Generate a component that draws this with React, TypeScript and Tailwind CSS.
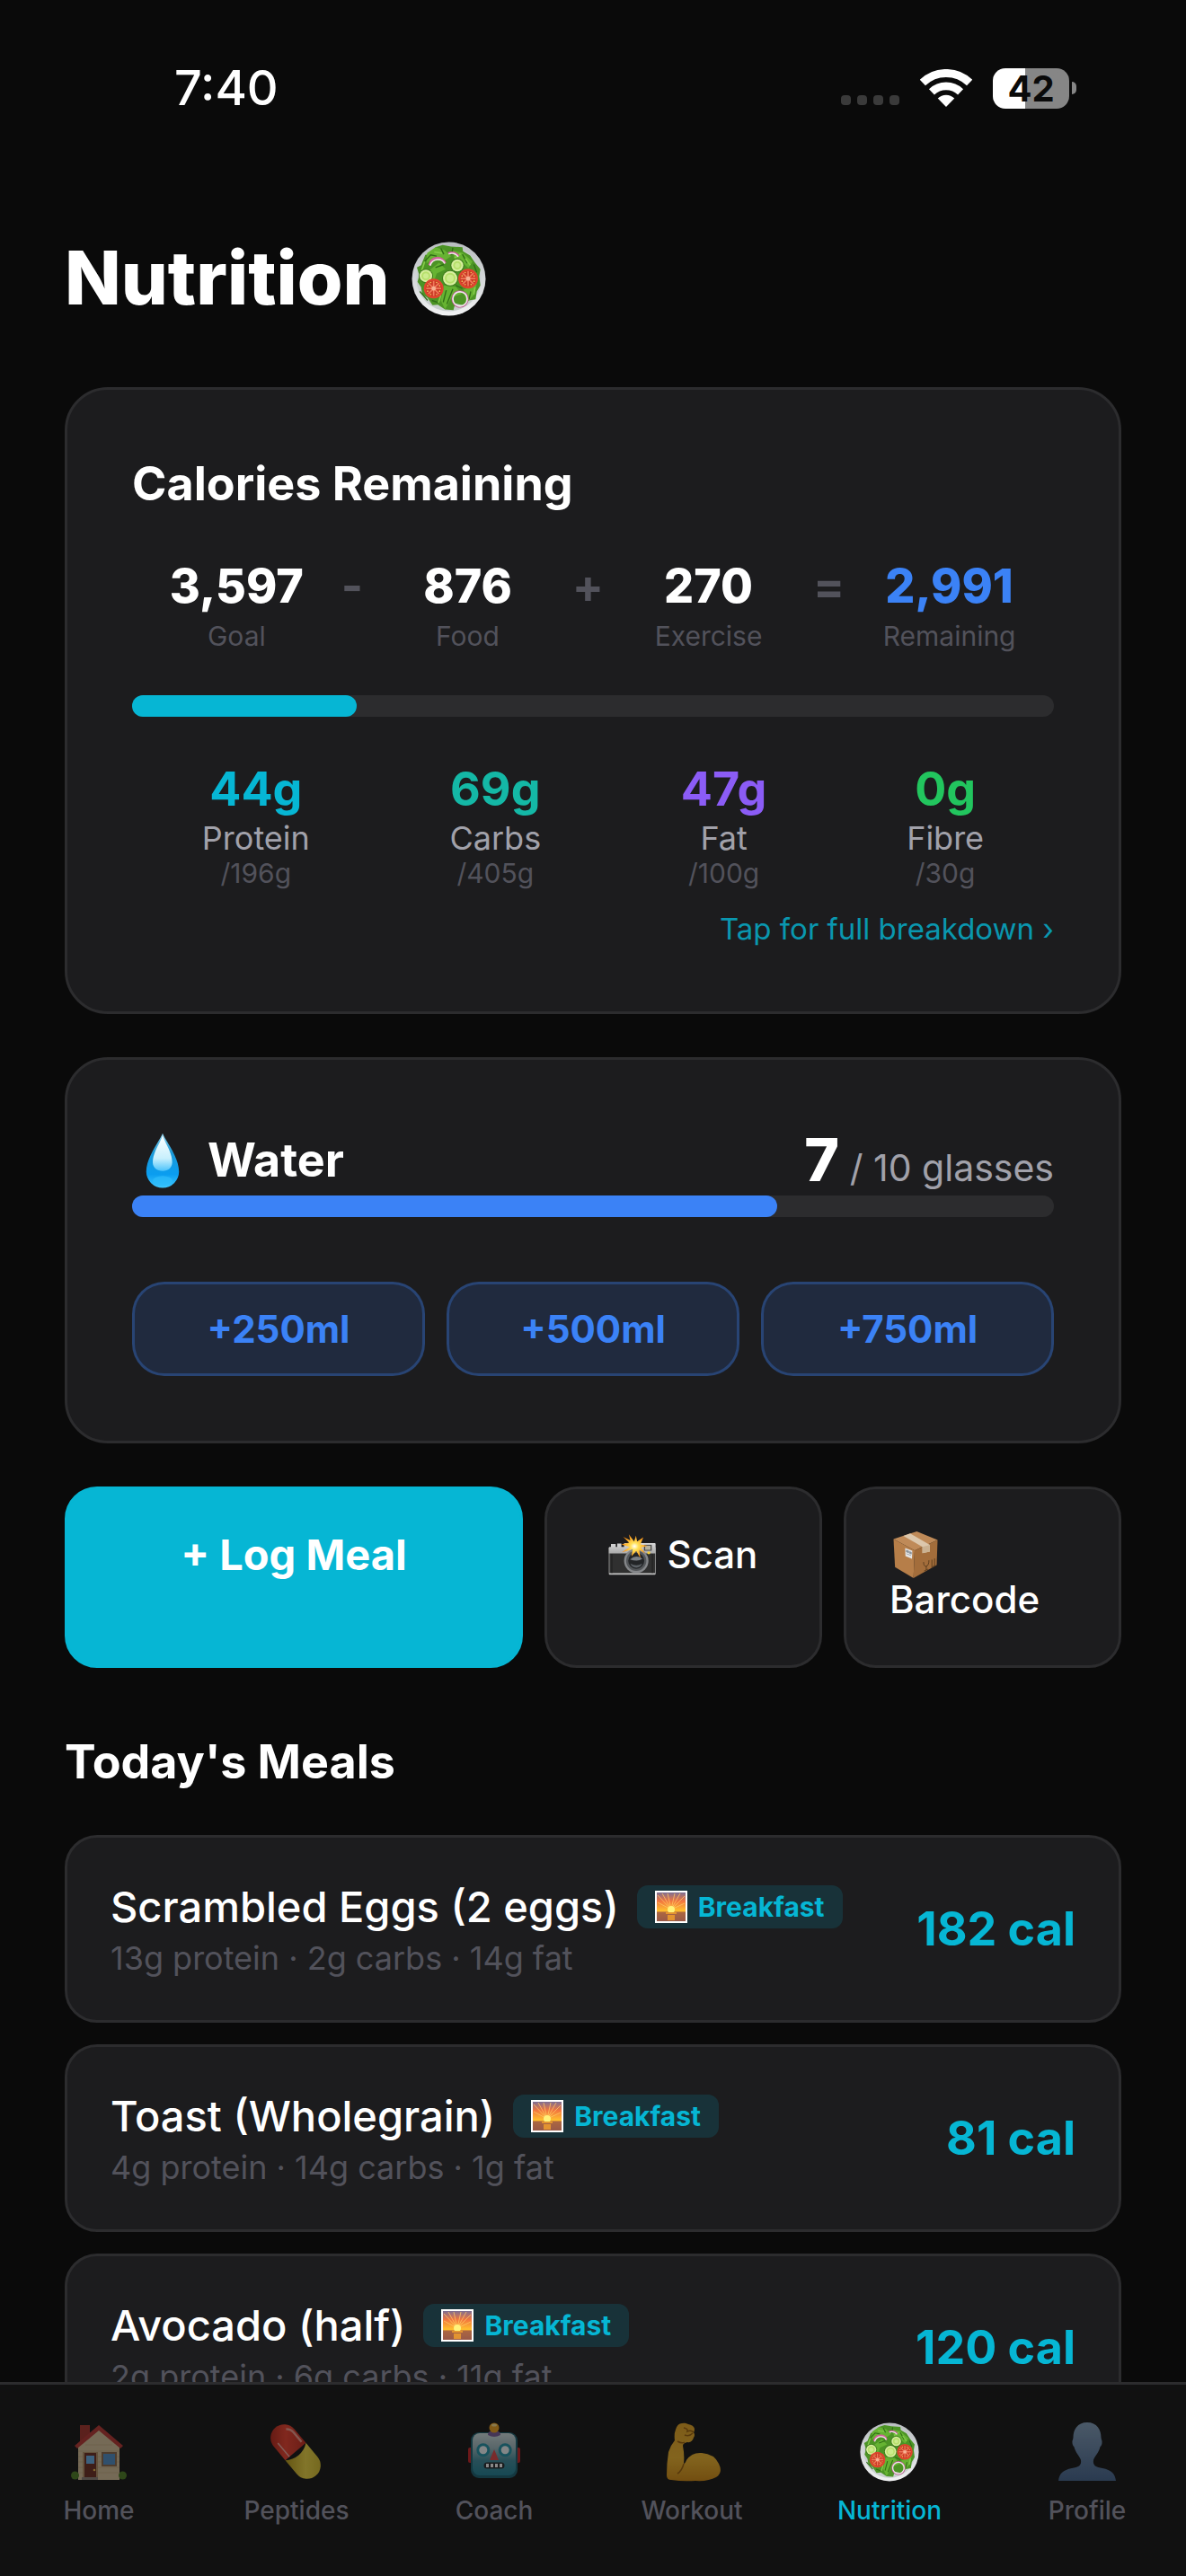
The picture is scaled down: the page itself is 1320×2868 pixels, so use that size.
import type { ReactNode } from "react";

const macros = [
  { value: "44g", label: "Protein", goal: "/196g", color: "text-[#06b6d4]" },
  { value: "69g", label: "Carbs", goal: "/405g", color: "text-[#14b8a6]" },
  { value: "47g", label: "Fat", goal: "/100g", color: "text-[#8b5cf6]" },
  { value: "0g", label: "Fibre", goal: "/30g", color: "text-[#22c55e]" },
];

const meals = [
  { name: "Scrambled Eggs (2 eggs)", detail: "13g protein · 2g carbs · 14g fat", cal: 182 },
  { name: "Toast (Wholegrain)", detail: "4g protein · 14g carbs · 1g fat", cal: 81 },
  { name: "Avocado (half)", detail: "2g protein · 6g carbs · 11g fat", cal: 120 },
];

// gradients shared by the emoji drawings
function Gradients() {
  return (
    <svg className="absolute w-0 h-0" aria-hidden="true">
      <defs>
        <linearGradient id="plate" x1="0" y1="0" x2="0" y2="1">
          <stop offset="0" stopColor="#b9bdc0" />
          <stop offset="1" stopColor="#f1f2f3" />
        </linearGradient>
        <linearGradient id="drop" x1="0" y1="0" x2="0" y2="1">
          <stop offset="0" stopColor="#8fd0ea" />
          <stop offset="0.35" stopColor="#1b9ad8" />
          <stop offset="0.75" stopColor="#0a9df0" />
          <stop offset="1" stopColor="#3fc8ff" />
        </linearGradient>
        <linearGradient id="dropShine" x1="0" y1="0" x2="0" y2="1">
          <stop offset="0" stopColor="#ffffff" />
          <stop offset="0.65" stopColor="#c8f0fd" />
          <stop offset="1" stopColor="#4cc3fb" />
        </linearGradient>
        <linearGradient id="silver" x1="0" y1="0" x2="0" y2="1">
          <stop offset="0" stopColor="#d9d9d9" />
          <stop offset="1" stopColor="#a9a9a9" />
        </linearGradient>
        <radialGradient id="flash">
          <stop offset="0" stopColor="#ffffff" />
          <stop offset="0.3" stopColor="#ffe25a" />
          <stop offset="1" stopColor="#fb8a0c" />
        </radialGradient>
        <linearGradient id="dusk" x1="0" y1="0" x2="0" y2="1">
          <stop offset="0" stopColor="#7d6f93" />
          <stop offset="0.3" stopColor="#f2763f" />
          <stop offset="0.64" stopColor="#ffc02e" />
          <stop offset="0.68" stopColor="#c9803a" />
          <stop offset="1" stopColor="#8c5250" />
        </linearGradient>
        <linearGradient id="robot" x1="0" y1="0" x2="0" y2="1">
          <stop offset="0" stopColor="#d3e2e4" />
          <stop offset="0.35" stopColor="#9fbac0" />
          <stop offset="0.65" stopColor="#3e8d9e" />
          <stop offset="1" stopColor="#1d8195" />
        </linearGradient>
        <linearGradient id="bust" x1="0" y1="0" x2="0" y2="1">
          <stop offset="0" stopColor="#84a0bd" />
          <stop offset="1" stopColor="#44658f" />
        </linearGradient>
        <linearGradient id="arm" x1="0" y1="0" x2="0" y2="1">
          <stop offset="0" stopColor="#e8a520" />
          <stop offset="0.6" stopColor="#f3b62b" />
          <stop offset="1" stopColor="#d38b10" />
        </linearGradient>
        <linearGradient id="pillRed" x1="0" y1="1" x2="1" y2="0">
          <stop offset="0" stopColor="#a81b10" />
          <stop offset="0.5" stopColor="#f0402c" />
          <stop offset="1" stopColor="#c52a1c" />
        </linearGradient>
        <linearGradient id="pillYellow" x1="0" y1="1" x2="1" y2="0">
          <stop offset="0" stopColor="#b99a16" />
          <stop offset="0.5" stopColor="#f2d943" />
          <stop offset="1" stopColor="#cfb626" />
        </linearGradient>
      </defs>
    </svg>
  );
}

function Tomato({ x, y }: { x: number; y: number }) {
  return (
    <g transform={`translate(${x} ${y})`}>
      <circle r="33" fill="#e2452f" />
      <circle r="27" fill="#c93a26" />
      <g stroke="#f0795a" strokeWidth="5">
        <path d="M0-25V25M-25 0H25M-18-18L18 18M-18 18L18-18" />
      </g>
      <circle r="7" fill="#f6b193" />
      <g fill="#f3c35c">
        <circle cx="-10" cy="-20" r="2.5" /><circle cx="10" cy="-20" r="2.5" />
        <circle cx="-20" cy="-9" r="2.5" /><circle cx="20" cy="-9" r="2.5" />
        <circle cx="-20" cy="9" r="2.5" /><circle cx="20" cy="9" r="2.5" />
        <circle cx="-10" cy="20" r="2.5" /><circle cx="10" cy="20" r="2.5" />
      </g>
    </g>
  );
}

function Cucumber({ x, y, r }: { x: number; y: number; r: number }) {
  return (
    <g transform={`translate(${x} ${y})`}>
      <circle r={r} fill="#3d7a1c" />
      <circle r={r - 3} fill="#d9f0a0" />
      <circle r={r - 9} fill="#b7e06c" />
      <circle r={r - 15} fill="#cdec8e" />
    </g>
  );
}

function Salad({ className }: { className: string }) {
  return (
    <svg viewBox="52 54 249 248" className={className} aria-hidden="true">
      <circle cx="176.5" cy="178" r="123" fill="url(#plate)" />
      <circle cx="176.5" cy="178" r="108" fill="#c9cfcf" />
      <path d="M132 72l24-7 28 5 38 2 2 14 24 14 16 24 18 22-4 24 4 30-12 20-4 26-22 4-20 16-26-6-6 22-28-2-24-16-18 2-16-24-18-12-4-24-12-18 6-22-8-26 14-8 14-34 20-4z" fill="#4c9425" />
      <path d="M132 72l30 10 22 20-26 18-32-10-24 16 2-34zM190 84l32 6 34 30-14 22-22-20-24-4zM110 150l34-26 22 22-30 14-10 30zM160 200l40 4 20 24-34 12-22 40-14-30zM226 214l44-18-10 36-24 26z" fill="#66b332" />
      <path d="M96 120l20-22 20 4M150 76l10 20M190 74l-4 24M222 96l16 30M160 130l-28 10M214 160l12-26M260 130l10 26M80 220l26 30M120 250l24 8M168 216l-10 40M190 212l-20 50M200 200l22 10M250 220l-6 26" fill="none" stroke="#2f6d16" strokeWidth="4" />
      <path d="M86 150l10-30M128 88l26 4M196 108l20-14M232 110l16 22M150 232l-8 26M264 206l-4 24" fill="none" stroke="#86cc4b" strokeWidth="5" />
      <path d="M112 132c6-30 44-30 52-6" fill="none" stroke="#d2619b" strokeWidth="8" />
      <path d="M114 134c8-26 40-26 49-7" fill="none" stroke="#f5e8ef" strokeWidth="5" />
      <path d="M174 92c12-6 28-2 36 10" fill="none" stroke="#c95c94" strokeWidth="6" />
      <path d="M176 95c12-5 24-1 32 9" fill="none" stroke="#f3e5ec" strokeWidth="4" />
      <Cucumber x={205} y={133} r={23} />
      <Cucumber x={100} y={168} r={24} />
      <Cucumber x={181} y={176} r={27} />
      <Tomato x={126} y={210} />
      <Tomato x={241} y={177} />
      <circle cx="214" cy="245" r="26" fill="none" stroke="#b7568a" strokeWidth="6" />
      <circle cx="214" cy="245" r="24" fill="none" stroke="#efe9ea" strokeWidth="5" />
    </svg>
  );
}

function Drop() {
  return (
    <svg viewBox="60 34 128 184" className="w-11 h-16" aria-hidden="true">
      <path d="M124 38c8 22 53 77 53 124a53 53 0 0 1-106 0c0-47 45-102 53-124z" fill="url(#drop)" />
      <path d="M124 44c6 24 31 54 31 88 0 18-13 28-31 28s-32-10-32-28c0-34 26-64 32-88z" fill="url(#dropShine)" />
      <ellipse cx="124" cy="192" rx="32" ry="16" fill="#2dbcfb" opacity="0.7" />
    </svg>
  );
}

function Camera() {
  return (
    <svg viewBox="24 26 160 137" className="w-[53px] h-[46px]" aria-hidden="true">
      <path d="M33 58h16v12H33zM54 57h14v14H54z" fill="#cfcfcf" />
      <rect x="26" y="69" width="157" height="93" rx="3" fill="#bdbdbd" />
      <path d="M26 72a3 3 0 0 1 3-3h48V57q0-2 3-2h100q3 0 3 3v32H26z" fill="url(#silver)" />
      <rect x="28" y="90" width="153" height="66" fill="#303030" />
      <path d="M36 92v64M172 92v64" stroke="#1d1d1d" strokeWidth="3" />
      <rect x="144" y="61" width="26" height="20" fill="#4a4a4a" />
      <rect x="148" y="64" width="18" height="14" fill="#b8b39f" />
      <circle cx="118" cy="115" r="41" fill="#85878a" />
      <circle cx="118" cy="115" r="34" fill="#54575a" />
      <circle cx="118" cy="115" r="27" fill="#232527" />
      <path d="M97 110q20-18 42-2-10 6-20 6t-22-4z" fill="#7c8186" />
      <path d="M98 124q20 12 40 0-6 14-20 14t-20-14z" fill="#5b6065" />
      <circle cx="160" cy="88" r="5" fill="#f7cf32" />
      <path d="M93 26l18 24 6-20 4 20 21-14-10 24 24 4-22 6 14 20-20-12 4 28-14-24-16 18 4-24-36 10 26-18-28-8 26-6-20-20 24 12z" fill="url(#flash)" />
    </svg>
  );
}

function Box() {
  return (
    <svg viewBox="974 17 150 157" className="w-[50px] h-[52px]" aria-hidden="true">
      <path d="M975 43l78-26 70 29-77 35z" fill="#bf8a58" />
      <path d="M975 43l71 38-4 93-62-37z" fill="#b67e49" />
      <path d="M1123 46l-77 35-4 93 78-44z" fill="#a36d3b" />
      <path d="M1008 32l23-8 66 38v23l-25 5V69z" fill="#dcc7ac" />
      <path d="M1072 69l25-7v23l-25 5z" fill="#cbb292" />
      <path d="M1014 73l24 9-1 27-22-9z" fill="#e6e6e6" />
      <path d="M1018 80l8 3v6l-8-3zM1029 85l6 2v6l-6-2zM1018 92l16 6" fill="#8a9299" stroke="#8a9299" strokeWidth="2" />
      <path d="M1076 120q0 16 9 14t9-20M1085 134v13M1078 150l13-6M1104 112v24M1113 108v24M1102 138l14-7" fill="none" stroke="#5d3d1e" strokeWidth="3" />
    </svg>
  );
}

function Sunrise() {
  return (
    <svg viewBox="0 0 36 36" className="w-9 h-9" aria-hidden="true">
      <rect width="36" height="36" fill="#fff" />
      <rect x="2" y="2" width="32" height="32" fill="url(#dusk)" />
      <g stroke="#ffc564" strokeWidth="1" opacity="0.8">
        <path d="M18 21L3 5M18 21L8 3M18 21L14 3M18 21L22 3M18 21L28 3M18 21L33 6M18 21L3 13M18 21L33 14" />
      </g>
      <circle cx="18" cy="21" r="4" fill="#fff27a" />
      <path d="M2 24h32v10H2z" fill="#a05c45" opacity="0.7" />
      <path d="M12 24h12v2H12zM14 27h8v6h-8z" fill="#f3a02c" opacity="0.8" />
    </svg>
  );
}

function House() {
  return (
    <svg viewBox="0 0 66 66" className="w-[66px] h-[66px]" aria-hidden="true">
      <path d="M12 3h11v12l-11 9z" fill="#a5312a" />
      <path d="M10 27L33 8l23 19v37H10z" fill="#d9c39b" />
      <path d="M10 32h46M10 38h46M10 44h46M10 50h46M10 56h46M18 25h30" stroke="#c8b087" />
      <path d="M33 3L6 26l3 3L33 9l24 20 3-3z" fill="#b93430" />
      <rect x="15" y="33" width="17" height="29" fill="#b79268" />
      <rect x="17" y="34" width="13" height="27" fill="#6b2c20" />
      <rect x="19" y="37" width="9" height="9" fill="#69b1ea" />
      <circle cx="28" cy="53" r="1.3" fill="#f3c44e" />
      <rect x="36" y="33" width="17" height="16" fill="#8b6a4b" />
      <rect x="38" y="35" width="13" height="12" fill="#4f8fc9" />
      <path d="M14 61h18v3H14z" fill="#8f8379" />
      <circle cx="6.5" cy="59" r="4.5" fill="#4b7d22" />
      <circle cx="59.5" cy="59" r="4.5" fill="#4b7d22" />
    </svg>
  );
}

function Pill() {
  return (
    <svg viewBox="0 0 66 66" className="w-[66px] h-[66px]" aria-hidden="true">
      <g transform="translate(32 32.5) rotate(50)">
        <path d="M0-15h-20a15 15 0 0 0 0 30H0z" fill="url(#pillRed)" />
        <path d="M0-15h20a15 15 0 0 1 0 30H0a24 24 0 0 0 0-30z" fill="url(#pillYellow)" />
        <path d="M-26-8q3-4 8-4h14" fill="none" stroke="#f59c8e" strokeWidth="2.5" />
        <path d="M-20 9H0" stroke="#f3a79c" strokeWidth="1.5" />
      </g>
    </svg>
  );
}

function Robot() {
  return (
    <svg viewBox="0 0 66 66" className="w-[66px] h-[66px]" aria-hidden="true">
      <rect x="4" y="28" width="6" height="17" rx="2" fill="#c81f24" />
      <rect x="56" y="28" width="6" height="17" rx="2" fill="#c81f24" />
      <rect x="7" y="11" width="52" height="51" rx="9" fill="#175f70" />
      <rect x="9" y="12" width="48" height="47" rx="8" fill="url(#robot)" />
      <path d="M26 14q0-5 7-5t7 5q-7 4-14 0z" fill="#7a5b9c" />
      <circle cx="33" cy="6" r="5.5" fill="#f0a21c" />
      <ellipse cx="33" cy="3" rx="3" ry="1.5" fill="#ffe08a" />
      <circle cx="20.8" cy="30.7" r="7.5" fill="#1f93a8" />
      <circle cx="20.8" cy="30.7" r="4.5" fill="#f4fbfc" />
      <circle cx="45.2" cy="30.7" r="7.5" fill="#1f93a8" />
      <circle cx="45.2" cy="30.7" r="4.5" fill="#f4fbfc" />
      <path d="M33 30l5 12H28z" fill="#e04545" />
      <rect x="21.5" y="44.5" width="23" height="7" rx="3.5" fill="#22282b" />
      <path d="M24 46h3v4h-3zM29 46h3v4h-3zM34 46h3v4h-3zM39 46h3v4h-3z" fill="#fff" />
    </svg>
  );
}

function Biceps() {
  return (
    <svg viewBox="0 0 66 66" className="w-[66px] h-[66px]" aria-hidden="true">
      <path d="M22 1q4-1 7 1 6 1 7 5 0 3-1 4 2 3 0 6-2 6-7 5-5 1-5 4 2 10 1 20 2-1 3-4 6-9 17-8 14 1 19 12 5 10-3 15-9 5-23 4-13 1-27-1-5 0-5-5 0-14 2-26 2-7 7-13-1-7 1-12 2-7 7-7z" fill="url(#arm)" />
      <path d="M24 46q-2 8-7 11M24 6q5 1 4 4 4-2 7 1M25 14q5 2 9-2M17 21q5 3 8 1" fill="none" stroke="#9c5f08" strokeWidth="1.5" />
    </svg>
  );
}

function Bust() {
  return (
    <svg viewBox="0 0 66 66" className="w-[66px] h-[66px]" aria-hidden="true">
      <path d="M33 0c11 0 15.500 8 15.500 17 0 2 1.500 3 1 6-.5 4-2 3-2.500 6-2 6-6 9-7 13-1 6 3 8 10 9 10 2 14 6 15 14H1c1-8 5-12 15-14 7-1 11-3 10-9-1-4-5-7-7-13-.5-3-2-2-2.500-6-.5-3 1-4 1-6C17.500 8 22 0 33 0z" fill="url(#bust)" />
    </svg>
  );
}

function StatusBar() {
  return (
    <header className="flex items-center justify-between pt-[66px] pl-[194px] pr-[122px] shrink-0">
      <div className="text-[54px] leading-[64px] font-medium">7:40</div>

      <div className="flex items-center">
        <div className="flex gap-[7px] self-end pb-1 mr-[23px]">
          <span className="w-[11px] h-[11px] rounded bg-[#3a3a3a]" />
          <span className="w-[11px] h-[11px] rounded bg-[#3a3a3a]" />
          <span className="w-[11px] h-[11px] rounded bg-[#3a3a3a]" />
          <span className="w-[11px] h-[11px] rounded bg-[#3a3a3a]" />
        </div>

        <svg viewBox="314 60 174 127" className="w-[58px] h-[42px] mr-[23px]" aria-label="Wi-Fi">
          <path d="M322 105.400a113.500 113.500 0 0 1 158 0" fill="none" stroke="#fff" strokeWidth="27" />
          <path d="M352.400 136.600a70 70 0 0 1 97.200 0" fill="none" stroke="#fff" strokeWidth="26" />
          <path d="M401 187l-28-28.800a40 40 0 0 1 56 0z" fill="#fff" />
        </svg>

        <div className="w-[85px] h-[45px] rounded-[14px] bg-linear-to-r from-white from-42% to-[#868686] to-42% flex items-center justify-center text-[40px] leading-[45px] font-bold text-[#0a0a0a]">
          42
        </div>
        <span className="ml-[3px] w-[5px] h-[14px] rounded-r-full bg-[#868686]" />
      </div>
    </header>
  );
}

function Stat({ value, label, color }: { value: string; label: string; color: string }) {
  return (
    <div className="flex-1 text-center">
      <div className={`text-[52px] leading-[66px] font-extrabold ${color}`}>{value}</div>
      <div className="text-[30px] leading-[44px] text-[#52525b]">{label}</div>
    </div>
  );
}

function Operator({ children }: { children: ReactNode }) {
  return <div className="text-[52px] leading-[66px] font-bold text-[#52525b]">{children}</div>;
}

function CaloriesCard() {
  return (
    <section className="bg-[#1c1c1e] border-[3px] border-[#2c2c2e] rounded-[48px] p-[72px]">
      <h2 className="text-[52px] leading-[66px] font-bold">Calories Remaining</h2>

      <div className="flex mt-12">
        <Stat value="3,597" label="Goal" color="text-white" />
        <Operator>-</Operator>
        <Stat value="876" label="Food" color="text-white" />
        <Operator>+</Operator>
        <Stat value="270" label="Exercise" color="text-white" />
        <Operator>=</Operator>
        <Stat value="2,991" label="Remaining" color="text-[#3b82f6]" />
      </div>

      <div className="mt-11 h-6 rounded-xl bg-[#2c2c2e]">
        <div className="h-6 rounded-xl bg-[#06b6d4]" style={{ width: `${(876 / 3597) * 100}%` }} />
      </div>

      <div className="mt-12 flex justify-around text-center">
        {macros.map((macro) => (
          <div key={macro.label}>
            <div className={`text-[52px] leading-[66px] font-bold ${macro.color}`}>{macro.value}</div>
            <div className="text-[36px] leading-[42px] text-[#a1a1aa]">{macro.label}</div>
            <div className="text-[30px] leading-[36px] text-[#52525b]">{macro.goal}</div>
          </div>
        ))}
      </div>

      <a href="#breakdown" className="block mt-6 text-right text-[33px] leading-[40px] text-[#06b6d4] opacity-80">
        Tap for full breakdown ›
      </a>
    </section>
  );
}

function WaterCard() {
  return (
    <section className="mt-12 bg-[#1c1c1e] border-[3px] border-[#2c2c2e] rounded-[48px] p-[72px]">
      <div className="flex items-center justify-between">
        <h2 className="flex items-center gap-7 pl-3 text-[52px] leading-[66px] font-bold">
          <Drop />
          Water
        </h2>
        <div className="text-[66px] leading-[79px] font-extrabold">
          7<span className="text-[41px] leading-none font-normal text-[#a1a1aa]"> / 10 glasses</span>
        </div>
      </div>

      <div className="h-6 rounded-xl bg-[#2c2c2e]">
        <div className="h-6 rounded-xl bg-[#3b82f6]" style={{ width: `${(7 / 10) * 100}%` }} />
      </div>

      <div className="mt-[72px] grid grid-cols-3 gap-6">
        {["+250ml", "+500ml", "+750ml"].map((amount) => (
          <button
            key={amount}
            className="py-6 rounded-[36px] border-[3px] border-[#3b82f6]/40 bg-[#3b82f6]/15 bg-clip-padding text-[42px] leading-[51px] font-bold text-[#3b82f6]"
          >
            {amount}
          </button>
        ))}
      </div>
    </section>
  );
}

function Actions() {
  return (
    <div className="mt-12 grid grid-cols-[33fr_20fr_20fr] gap-6 text-[42px] leading-[50px] font-medium">
      <button className="flex items-start justify-center p-12 border-[3px] border-[#06b6d4] bg-[#06b6d4] rounded-[36px] text-[47px] leading-[50px] font-bold">
        + Log Meal
      </button>
      <button className="flex items-start justify-center p-12 border-[3px] border-[#2c2c2e] bg-[#1c1c1e] rounded-[36px]">
        <span className="flex items-center gap-3">
          <Camera />
          Scan
        </span>
      </button>
      <button className="flex flex-col items-start p-12 border-[3px] border-[#2c2c2e] bg-[#1c1c1e] rounded-[36px]">
        <span className="flex items-center h-[50px] pl-1">
          <Box />
        </span>
        Barcode
      </button>
    </div>
  );
}

function MealRow({ name, detail, cal }: { name: string; detail: string; cal: number }) {
  return (
    <li className="flex items-center justify-between bg-[#1c1c1e] border-[3px] border-[#2c2c2e] rounded-[36px] p-12">
      <div>
        <div className="flex items-center gap-5">
          <h3 className="text-[47px] leading-[58px] font-medium">{name}</h3>
          <span className="flex items-center gap-3 h-12 px-5 rounded-xl bg-[#06b6d4]/15 text-[30px] leading-[36px] font-bold text-[#06b6d4]">
            <Sunrise />
            Breakfast
          </span>
        </div>
        <p className="mt-2 text-[36px] leading-[41px] text-[#52525b]">{detail}</p>
      </div>

      <div className="text-[52px] leading-[66px] font-bold text-[#06b6d4]">{cal} cal</div>
    </li>
  );
}

const tabs = [
  { label: "Home", icon: <House /> },
  { label: "Peptides", icon: <Pill /> },
  { label: "Coach", icon: <Robot /> },
  { label: "Workout", icon: <Biceps /> },
  { label: "Nutrition", icon: <Salad className="w-[66px] h-[66px]" />, active: true },
  { label: "Profile", icon: <Bust /> },
];

function TabBar() {
  return (
    <nav className="shrink-0 grid grid-cols-6 bg-[#111111] border-t-[3px] border-[#2c2c2e] pt-[42px] pb-[55px]">
      {tabs.map((tab) => (
        <a key={tab.label} href={`#${tab.label.toLowerCase()}`} className="flex flex-col items-center gap-[14px]">
          <span className={tab.active ? "" : "opacity-50"}>{tab.icon}</span>
          <span
            className={`text-[28px] leading-[36px] font-medium ${tab.active ? "text-[#06b6d4]" : "text-[#52525b]"}`}
          >
            {tab.label}
          </span>
        </a>
      ))}
    </nav>
  );
}

export default function App() {
  return (
    <div className="h-screen flex flex-col bg-[#0a0a0a] text-white font-[Inter,sans-serif]">
      <Gradients />
      <StatusBar />

      <main className="flex-1 min-h-0 overflow-hidden px-[72px] pt-[132px]">
        <h1 className="flex items-center gap-6 mb-[73px] text-[82px] leading-[96px] font-extrabold">
          Nutrition
          <Salad className="w-[83px] h-[83px]" />
        </h1>

        <CaloriesCard />
        <WaterCard />
        <Actions />

        <h2 className="mt-[72px] text-[52px] leading-[66px] font-bold">Today's Meals</h2>

        <ul className="mt-12 flex flex-col gap-6">
          {meals.map((meal) => (
            <MealRow key={meal.name} {...meal} />
          ))}
        </ul>
      </main>

      <TabBar />
    </div>
  );
}
